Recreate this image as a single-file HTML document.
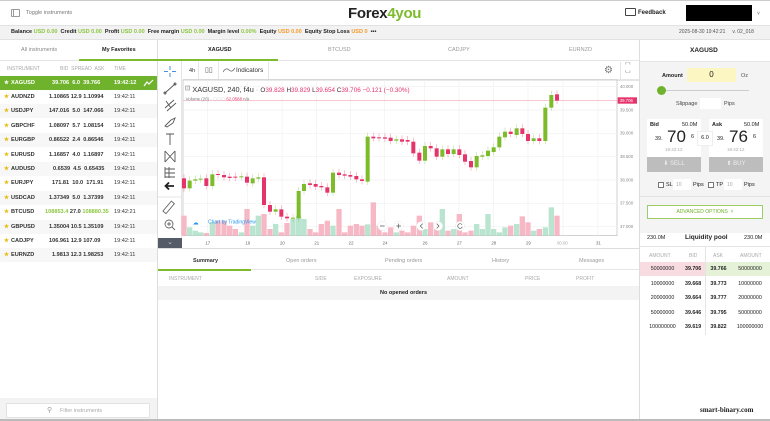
<!DOCTYPE html>
<html><head><meta charset="utf-8"><style>
*{margin:0;padding:0;box-sizing:border-box}
body{width:770px;height:421px;overflow:hidden;background:#fff;font-family:"Liberation Sans",sans-serif;position:relative;color:#222}
.a{position:absolute;white-space:nowrap}
.s{font-size:5.5px}
.g{color:#8cc63f}.o{color:#f39c2a}
.row{position:absolute;left:0;width:157px;height:14px;font-size:5.6px;font-weight:bold;color:#333}
.row span{position:absolute;top:4px}
.hd{color:#aaa;font-size:5px}
.lr{position:absolute;left:640px;width:130px;height:14.5px;font-size:5.3px;display:flex;align-items:center}
.lr span,.lr b{display:block}
</style></head><body>
<div class="a" style="left:0;top:0;width:770px;height:1px;background:#ccc"></div>
<div class="a" style="left:11px;top:9px;width:9px;height:8px;border:1px solid #999;border-radius:1px"></div>
<div class="a" style="left:13px;top:10px;width:1px;height:6px;background:#999"></div>
<div class="a s" style="left:26px;top:10px;color:#777">Toggle instruments</div>
<div class="a" style="left:348px;top:5px;font-size:15px;font-weight:bold;color:#222;letter-spacing:-0.3px">Forex<span style="color:#7dbb2d">4you</span></div>
<div class="a" style="left:625px;top:8px;width:11px;height:8px;border:1px solid #444;border-radius:1px"></div>
<div class="a" style="left:638px;top:10px;font-size:6px;font-weight:bold">Feedback</div>
<div class="a" style="left:686px;top:5px;width:66px;height:16px;background:#000"></div>
<div class="a" style="left:757px;top:11px;font-size:5px;color:#555">˅</div>
<div class="a" style="left:0;top:25px;width:770px;height:15px;background:#f2f2f2;border-top:1px solid #e2e2e2;border-bottom:1px solid #e2e2e2"></div>
<div class="a s" style="left:11px;top:29px;font-weight:bold">Balance <span class="g">USD 0.00</span> &nbsp;Credit <span class="g">USD 0.00</span> &nbsp;Profit <span class="g">USD 0.00</span> &nbsp;Free margin <span class="g">USD 0.00</span> &nbsp;Margin level <span class="g">0.00%</span> &nbsp;Equity <span class="o">USD 0.00</span> &nbsp;Equity Stop Loss <span class="o">USD 0</span> &nbsp;•••</div>
<div class="a" style="left:679px;top:29px;font-size:5px;color:#555">2025-08-30 19:42:21 &nbsp;&nbsp;&nbsp;&nbsp;v. 02_018</div>

<div class="a" style="left:157px;top:40px;width:1px;height:381px;background:#ddd"></div>
<div class="a s" style="left:21px;top:47px;color:#888">All instruments</div>
<div class="a s" style="left:102px;top:47px;font-weight:bold">My Favorites</div>
<div class="a" style="left:0;top:60px;width:640px;height:1px;background:#e5e5e5"></div>
<div class="a" style="left:79px;top:59px;width:199px;height:2px;background:#7dbb2d"></div>
<div class="a hd" style="left:7px;top:66px">INSTRUMENT</div>
<div class="a hd" style="left:60px;top:66px">BID &nbsp;SPREAD &nbsp;ASK</div>
<div class="a hd" style="left:114px;top:66px">TIME</div>
<div style="position:absolute;left:0;top:76px">
<div class="row" style="top:0;background:#6fb22c;color:#fff"><span style="left:4px">★</span><span style="left:11px">XAGUSD</span><span style="left:52px">39.706 &nbsp;6.0 &nbsp;39.766</span><span style="left:114px">19:42:12</span>
<svg style="position:absolute;left:143px;top:3px" width="11" height="8"><path d="M1 7 L4 3 L6 5 L10 1" stroke="#fff" fill="none" stroke-width="1.2"/></svg></div>
</div>
<div style="position:absolute;left:0;top:90px;width:157px">
<div class="row" style="top:0px"><span style="left:4px;color:#e8b900">★</span><span style="left:11px">AUDNZD</span><span style="left:49px">1.10865 12.9 1.10994</span><span style="left:114px;font-weight:normal">19:42:11</span></div>
<div class="row" style="top:14.4px;background:#f7f7f7"><span style="left:4px;color:#e8b900">★</span><span style="left:11px">USDJPY</span><span style="left:49px">147.016 &nbsp;5.0 &nbsp;147.066</span><span style="left:114px;font-weight:normal">19:42:11</span></div>
<div class="row" style="top:28.8px"><span style="left:4px;color:#e8b900">★</span><span style="left:11px">GBPCHF</span><span style="left:49px">1.08097 &nbsp;5.7 &nbsp;1.08154</span><span style="left:114px;font-weight:normal">19:42:11</span></div>
<div class="row" style="top:43.2px;background:#f7f7f7"><span style="left:4px;color:#e8b900">★</span><span style="left:11px">EURGBP</span><span style="left:49px">0.86522 &nbsp;2.4 &nbsp;0.86546</span><span style="left:114px;font-weight:normal">19:42:11</span></div>
<div class="row" style="top:57.6px"><span style="left:4px;color:#e8b900">★</span><span style="left:11px">EURUSD</span><span style="left:49px">1.16857 &nbsp;4.0 &nbsp;1.16897</span><span style="left:114px;font-weight:normal">19:42:11</span></div>
<div class="row" style="top:72px;background:#f7f7f7"><span style="left:4px;color:#e8b900">★</span><span style="left:11px">AUDUSD</span><span style="left:53px">0.6539 &nbsp;4.5 &nbsp;0.65435</span><span style="left:114px;font-weight:normal">19:42:11</span></div>
<div class="row" style="top:86.4px"><span style="left:4px;color:#e8b900">★</span><span style="left:11px">EURJPY</span><span style="left:52px">171.81 &nbsp;10.0 &nbsp;171.91</span><span style="left:114px;font-weight:normal">19:42:11</span></div>
<div class="row" style="top:100.8px;background:#f7f7f7"><span style="left:4px;color:#e8b900">★</span><span style="left:11px">USDCAD</span><span style="left:49px">1.37349 &nbsp;5.0 &nbsp;1.37399</span><span style="left:114px;font-weight:normal">19:42:11</span></div>
<div class="row" style="top:115.2px"><span style="left:4px;color:#e8b900">★</span><span style="left:11px">BTCUSD</span><span style="left:45px"><b class="g">108853.4</b> 27.0 <b class="g">108880.35</b></span><span style="left:114px;font-weight:normal">19:42:21</span></div>
<div class="row" style="top:129.6px;background:#f7f7f7"><span style="left:4px;color:#e8b900">★</span><span style="left:11px">GBPUSD</span><span style="left:49px">1.35004 10.5 1.35109</span><span style="left:114px;font-weight:normal">19:42:11</span></div>
<div class="row" style="top:144px"><span style="left:4px;color:#e8b900">★</span><span style="left:11px">CADJPY</span><span style="left:49px">106.961 12.9 107.09</span><span style="left:114px;font-weight:normal">19:42:11</span></div>
<div class="row" style="top:158.4px;background:#f7f7f7"><span style="left:4px;color:#e8b900">★</span><span style="left:11px">EURNZD</span><span style="left:52px">1.9813 12.3 1.98253</span><span style="left:114px;font-weight:normal">19:42:11</span></div>
</div>
<div class="a" style="left:0;top:398px;width:157px;height:23px;background:#f3f3f3"></div>
<div class="a" style="left:6px;top:403px;width:144px;height:15px;background:#fff;border:1px solid #e2e2e2"></div>
<div class="a" style="left:47px;top:406px;font-size:7px;color:#999">⚲</div>
<div class="a s" style="left:60px;top:408px;color:#aaa">Filter instruments</div>

<div class="a s" style="left:208px;top:47px;font-weight:bold">XAGUSD</div>
<div class="a s" style="left:328px;top:47px;color:#999">BTCUSD</div>
<div class="a s" style="left:448px;top:47px;color:#999">CADJPY</div>
<div class="a s" style="left:569px;top:47px;color:#999">EURNZD</div>

<div class="a" style="left:158px;top:61px;width:24px;height:187px;background:#fff;border-right:1px solid #e5e5e5"></div>
<svg class="a" style="left:158px;top:61px" width="25" height="190">
<g stroke="#4a90d9" stroke-width="1"><path d="M12 5v4M12 12v4M6 10.5h4M14 10.5h4"/></g>
<g stroke="#555" fill="none" stroke-width="0.9">
<path d="M7 32 L17 23"/><circle cx="7" cy="32" r="1"/><circle cx="17" cy="23" r="1"/>
<path d="M7 47 L16 39 M9 50 L18 42 M8 40 L13 47"/>
<path d="M7 65 L13 59 L17 57 L15 62 L9 66Z"/>
<path d="M8 73 H16 M12 73 V84"/>
<path d="M7 90 L17 101 M7 101 L17 90 M7 90V101 M17 90V101"/>
<path d="M7 106 V117 M7 108 H17 M7 112 H17 M7 116 H17 M11 106V117"/>
</g>
<path d="M16 125 H8 M11 121.5 L7.5 125 L11 128.5" stroke="#222" stroke-width="1.8" fill="none"/>
<line x1="0" y1="136" x2="24" y2="136" stroke="#e5e5e5"/>
<g stroke="#666" fill="none" stroke-width="0.9"><rect x="9" y="140" width="4" height="13" transform="rotate(40 11 146)"/>
<circle cx="11" cy="163" r="4"/><path d="M14 166 L17 169 M9 163h4M11 161v4"/></g>
</svg>
<div class="a" style="left:158px;top:238px;width:24px;height:10px;background:#555c68;color:#ccc;font-size:7px;text-align:center;line-height:10px">⌄</div>

<div class="a" style="left:183px;top:61px;width:457px;height:20px;border-bottom:2px solid #e5e5e5"></div>
<div class="a s" style="left:189px;top:68px;color:#333">4h</div>
<div class="a" style="left:198px;top:62px;width:1px;height:17px;background:#e5e5e5"></div>
<div class="a" style="left:205px;top:66px;font-size:7px;color:#555">▯▯</div>
<div class="a" style="left:218px;top:62px;width:1px;height:17px;background:#e5e5e5"></div>
<svg class="a" style="left:223px;top:67px" width="12" height="6"><path d="M0 5 Q3 0 6 3 T12 1" stroke="#666" fill="none" stroke-width="0.8"/></svg>
<div class="a" style="left:236px;top:67px;font-size:6.3px;color:#333">Indicators</div>
<div class="a" style="left:268px;top:62px;width:1px;height:17px;background:#e5e5e5"></div>
<div class="a" style="left:604px;top:65px;font-size:10px;color:#777">⚙</div>
<div class="a" style="left:620px;top:62px;width:1px;height:17px;background:#e5e5e5"></div>
<div class="a" style="left:625px;top:64px;font-size:6px;color:#777;line-height:5px">⌜⌝<br>⌞⌟</div>

<svg class="a" style="left:158px;top:60px" width="482" height="190" viewBox="0 0 1446 570">
<rect x="75" y="60" width="1302" height="467" fill="#fff" stroke="#bbb" stroke-width="2"/>
<g stroke="#f0f0f0" stroke-width="2">
<path d="M148 60V527M268 60V527M372 60V527M475 60V527M578 60V527M680 60V527M800 60V527M903 60V527M1006 60V527M1110 60V527M1215 60V527M1320 60V527"/>
<path d="M75 80H1377M75 150H1377M75 220H1377M75 290H1377M75 360H1377M75 430H1377M75 500H1377"/>
</g>
<line x1="75" y1="121" x2="1377" y2="121" stroke="#f5a3b8" stroke-width="2"/>
<g id="vol"></g>
<g id="cnd"></g>
<g font-family="Liberation Sans" font-size="13" fill="#888">
<text x="1386" y="84">40.000</text><text x="1386" y="155">39.500</text><text x="1386" y="224">39.000</text><text x="1386" y="294">38.500</text><text x="1386" y="364">38.000</text><text x="1386" y="434">37.500</text><text x="1386" y="504">37.000</text>
</g>
<rect x="1379" y="112" width="58" height="19" fill="#e5336b"/><text x="1385" y="126" font-family="Liberation Sans" font-size="13" fill="#fff">39.706</text>
<g font-family="Liberation Sans" font-size="13" fill="#666">
<text x="142" y="553">17</text><text x="262" y="553">19</text><text x="366" y="553">20</text><text x="469" y="553">21</text><text x="572" y="553">22</text><text x="674" y="553">24</text><text x="794" y="553">26</text><text x="897" y="553">27</text><text x="1000" y="553">28</text><text x="1104" y="553">29</text><text x="1197" y="553" fill="#aaa">00:00</text><text x="1314" y="553">31</text>
</g>
<rect x="83" y="78" width="12" height="12" fill="none" stroke="#999" stroke-width="2"/><path d="M86 84h6" stroke="#999" stroke-width="2"/>
<text x="103" y="96" font-family="Liberation Sans" font-size="22" fill="#333">XAGUSD, 240, f4u <tspan fill="#aaa">·</tspan> <tspan fill="#333" font-size="19"> O</tspan><tspan fill="#e5336b" font-size="19">39.828 </tspan><tspan font-size="19"> H</tspan><tspan fill="#e5336b" font-size="19">39.829 </tspan><tspan font-size="19"> L</tspan><tspan fill="#e5336b" font-size="19">39.654 </tspan><tspan font-size="19"> C</tspan><tspan fill="#e5336b" font-size="19">39.706 </tspan><tspan fill="#e5336b" font-size="19">  −0.121 (−0.30%)</tspan></text>
<text x="83" y="121" font-family="Liberation Sans" font-size="13" fill="#777">Volume (20) ·  <tspan fill="#ccc">▢▢▢</tspan>  <tspan fill="#e5336b">62.0588</tspan>   n/a</text>
<circle cx="117" cy="486" r="18" fill="#fff"/><text x="104" y="493" font-size="18" fill="#2196f3">☁</text>
<text x="150" y="491" font-family="Liberation Sans" font-size="15" fill="#2196f3">Chart by TradingView</text>
<g fill="#fff" stroke="#ddd"><circle cx="673" cy="498" r="14"/><circle cx="722" cy="498" r="14"/><circle cx="790" cy="498" r="14"/><circle cx="840" cy="498" r="14"/><circle cx="906" cy="498" r="14"/></g>
<g stroke="#555" stroke-width="2" fill="none"><path d="M666 498h14M715 498h14M722 491v14M794 491l-7 7l7 7M836 491l7 7l-7 7"/><path d="M912 494 A7 7 0 1 0 913 500"/></g>
</svg>
<script>
(function(){
var c=[[78,355,385,0],[95,362,385,1],[112,358,362,1],[128,356,359,1],[145,355,378,0],[163,343,378,1],[180,342,345,0],[198,345,352,0],[215,350,354,0],[232,350,353,0],[250,349,352,1],[267,350,368,0],[284,355,370,1],[301,352,356,1],[318,352,435,0],[336,435,455,0],[353,448,455,1],[370,448,470,0],[387,470,475,0],[405,473,476,1],[422,393,475,1],[438,372,393,1],[456,370,375,0],[473,372,380,0],[490,378,382,0],[508,382,398,0],[525,338,398,1],[543,338,345,0],[560,343,347,0],[577,345,350,0],[595,348,358,0],[612,358,363,0],[629,230,365,1],[646,230,235,0],[663,232,235,0],[681,232,236,0],[698,233,243,0],[715,238,242,1],[732,238,245,0],[749,240,245,0],[766,245,280,0],[784,278,302,0],[801,258,302,1],[818,258,265,0],[836,265,290,0],[853,268,290,1],[870,268,282,0],[887,268,282,1],[904,268,285,0],[921,283,305,0],[939,303,322,0],[956,288,322,1],[973,286,290,1],[990,272,288,1],[1007,262,276,1],[1024,230,262,1],[1041,215,232,1],[1058,215,222,0],[1076,205,225,1],[1093,205,222,0],[1110,222,243,0],[1127,235,243,1],[1144,235,243,0],[1162,143,243,1],[1180,105,143,1],[1197,103,122,0]];
var v=[60,25,15,0,8,40,45,45,30,20,10,80,30,60,65,20,35,10,38,50,60,50,20,10,35,45,30,80,10,30,35,30,34,100,30,0,25,0,15,0,30,60,20,40,20,80,15,20,65,10,15,35,20,65,20,0,25,30,35,58,40,15,20,25,85,60,5];
var s='',t='';
c.forEach(function(k,i){var col=k[3]?'#7cbb29':'#e5336b';var h=Math.max(3,k[2]-k[1]);
s+='<line x1="'+k[0]+'" y1="'+(k[1]-12)+'" x2="'+k[0]+'" y2="'+(k[2]+10)+'" stroke="'+col+'" stroke-width="1.5" opacity="0.6"/><rect x="'+(k[0]-6)+'" y="'+k[1]+'" width="12" height="'+h+'" fill="'+col+'"/>';
var hv=v[i]||10;t+='<rect x="'+(k[0]-8)+'" y="'+(527-hv)+'" width="16" height="'+hv+'" fill="'+(k[3]?'#b9e4cf':'#f7b8c6')+'"/>';});
document.getElementById('cnd').innerHTML=s;document.getElementById('vol').innerHTML=t;})();
</script>
<div class="a" style="left:158px;top:248px;width:482px;height:1px;background:#ddd"></div>

<div class="a s" style="left:193px;top:258px;font-weight:bold;color:#333">Summary</div>
<div class="a s" style="left:286px;top:258px;color:#999">Open orders</div>
<div class="a s" style="left:385px;top:258px;color:#999">Pending orders</div>
<div class="a s" style="left:492px;top:258px;color:#999">History</div>
<div class="a s" style="left:579px;top:258px;color:#999">Messages</div>
<div class="a" style="left:158px;top:269px;width:482px;height:1px;background:#e5e5e5"></div>
<div class="a" style="left:158px;top:269px;width:93px;height:2px;background:#7dbb2d"></div>
<div class="a hd" style="left:169px;top:276px">INSTRUMENT</div>
<div class="a hd" style="left:315px;top:276px">SIDE</div>
<div class="a hd" style="left:354px;top:276px">EXPOSURE</div>
<div class="a hd" style="left:447px;top:276px">AMOUNT</div>
<div class="a hd" style="left:525px;top:276px">PRICE</div>
<div class="a hd" style="left:576px;top:276px">PROFIT</div>
<div class="a" style="left:158px;top:286px;width:482px;height:14px;background:#f3f3f3"></div>
<div class="a s" style="left:380px;top:290px;font-weight:bold">No opened orders</div>

<div class="a" style="left:639px;top:40px;width:1px;height:381px;background:#ddd"></div>
<div class="a" style="left:640px;top:61px;width:130px;height:172px;background:#f4f4f4;border-top:1px solid #e5e5e5"></div>
<div class="a" style="left:690px;top:47px;font-size:6.5px;font-weight:bold">XAGUSD</div>
<div class="a s" style="left:662px;top:73px;font-weight:bold">Amount</div>
<div class="a" style="left:687px;top:68px;width:49px;height:14px;background:#fbf6c2;font-size:8px;text-align:center;line-height:14px">0</div>
<div class="a s" style="left:741px;top:73px;color:#555">Oz</div>
<div class="a" style="left:663px;top:90px;width:86px;height:1px;background:#ccc"></div>
<div class="a" style="left:657px;top:86px;width:9px;height:9px;border-radius:50%;background:#6fb22c"></div>
<div class="a s" style="left:676px;top:101px;color:#444">Slippage</div>
<div class="a" style="left:700px;top:98px;width:21px;height:11px;background:#fff"></div>
<div class="a s" style="left:724px;top:101px;color:#444">Pips</div>
<div class="a" style="left:647px;top:119px;width:54px;height:38px;background:#fff"></div>
<div class="a" style="left:709px;top:119px;width:54px;height:38px;background:#fff"></div>
<div class="a s" style="left:650px;top:122px;font-weight:bold">Bid</div><div class="a s" style="left:682px;top:122px">50.0M</div>
<div class="a s" style="left:712px;top:122px;font-weight:bold">Ask</div><div class="a s" style="left:744px;top:122px">50.0M</div>
<div class="a s" style="left:655px;top:136px">39.</div><div class="a" style="left:667px;top:127px;font-size:17px">70</div><div class="a s" style="left:691px;top:134px">6</div>
<div class="a s" style="left:717px;top:136px">39.</div><div class="a" style="left:729px;top:127px;font-size:17px">76</div><div class="a s" style="left:753px;top:134px">6</div>
<div class="a" style="left:665px;top:147px;font-size:4.5px;color:#aaa">19:42:12</div><div class="a" style="left:727px;top:147px;font-size:4.5px;color:#aaa">19:42:12</div>
<div class="a" style="left:697px;top:131px;width:16px;height:15px;background:#fff;border:1px solid #eee;font-size:5.5px;text-align:center;line-height:13px">6.0</div>
<div class="a" style="left:647px;top:157px;width:54px;height:15px;background:#bdbdbd;color:#eee;font-size:6px;text-align:center;line-height:15px">⬇ SELL</div>
<div class="a" style="left:709px;top:157px;width:54px;height:15px;background:#bdbdbd;color:#eee;font-size:6px;text-align:center;line-height:15px">⬆ BUY</div>
<div class="a" style="left:658px;top:182px;width:6px;height:6px;border:1px solid #777;background:#fff"></div>
<div class="a s" style="left:666px;top:182px">SL</div><div class="a" style="left:673px;top:179px;width:18px;height:11px;background:#fff;font-size:5px;color:#aaa;padding:3px 3px">10</div><div class="a s" style="left:693px;top:182px">Pips</div>
<div class="a" style="left:708px;top:182px;width:6px;height:6px;border:1px solid #777;background:#fff"></div>
<div class="a s" style="left:716px;top:182px">TP</div><div class="a" style="left:724px;top:179px;width:18px;height:11px;background:#fff;font-size:5px;color:#aaa;padding:3px 3px">10</div><div class="a s" style="left:744px;top:182px">Pips</div>
<div class="a" style="left:640px;top:196px;width:130px;height:1px;background:#e3e3e3"></div>
<div class="a" style="left:647px;top:205px;width:116px;height:14px;border:1px solid #9ccc65;background:#fff;font-size:5px;color:#6fb22c;text-align:center;line-height:12px">ADVANCED OPTIONS &nbsp;˅</div>
<div class="a s" style="left:647px;top:235px">230.0M</div>
<div class="a" style="left:685px;top:234px;font-size:6.5px;font-weight:bold">Liquidity pool</div>
<div class="a s" style="left:744px;top:235px">230.0M</div>
<div class="a" style="left:640px;top:246px;width:130px;height:1px;background:#e5e5e5"></div>
<div class="a" style="left:705px;top:247px;width:1px;height:88px;background:#e5e5e5"></div>
<div class="a hd" style="left:649px;top:253px">AMOUNT</div><div class="a hd" style="left:689px;top:253px">BID</div><div class="a hd" style="left:713px;top:253px">ASK</div><div class="a hd" style="left:740px;top:253px">AMOUNT</div>
<div class="a" style="left:640px;top:262px;width:65px;height:14px;background:#f9dbe2"></div>
<div class="a" style="left:706px;top:262px;width:64px;height:14px;background:#e6f2d8"></div>
<div class="lr" style="top:262px"><span style="width:45px;text-align:center">50000000</span><b style="width:21px">39.706</b><b style="width:25px;text-align:center">39.766</b><span style="width:38px;text-align:center">50000000</span></div>
<div class="lr" style="top:276.5px"><span style="width:45px;text-align:center">10000000</span><b style="width:21px">39.668</b><b style="width:25px;text-align:center">39.773</b><span style="width:38px;text-align:center">10000000</span></div>
<div class="lr" style="top:291px"><span style="width:45px;text-align:center">20000000</span><b style="width:21px">39.664</b><b style="width:25px;text-align:center">39.777</b><span style="width:38px;text-align:center">20000000</span></div>
<div class="lr" style="top:305.5px"><span style="width:45px;text-align:center">50000000</span><b style="width:21px">39.646</b><b style="width:25px;text-align:center">39.795</b><span style="width:38px;text-align:center">50000000</span></div>
<div class="lr" style="top:320px"><span style="width:45px;text-align:center">100000000</span><b style="width:21px">39.619</b><b style="width:25px;text-align:center">39.822</b><span style="width:38px;text-align:center">100000000</span></div>
<div class="a" style="left:700px;top:406px;font-size:7px;color:#222;font-family:'Liberation Serif',serif;font-weight:bold">smart-binary.com</div>
<div class="a" style="left:0;top:419px;width:770px;height:2px;background:#bbb"></div>
</body></html>
